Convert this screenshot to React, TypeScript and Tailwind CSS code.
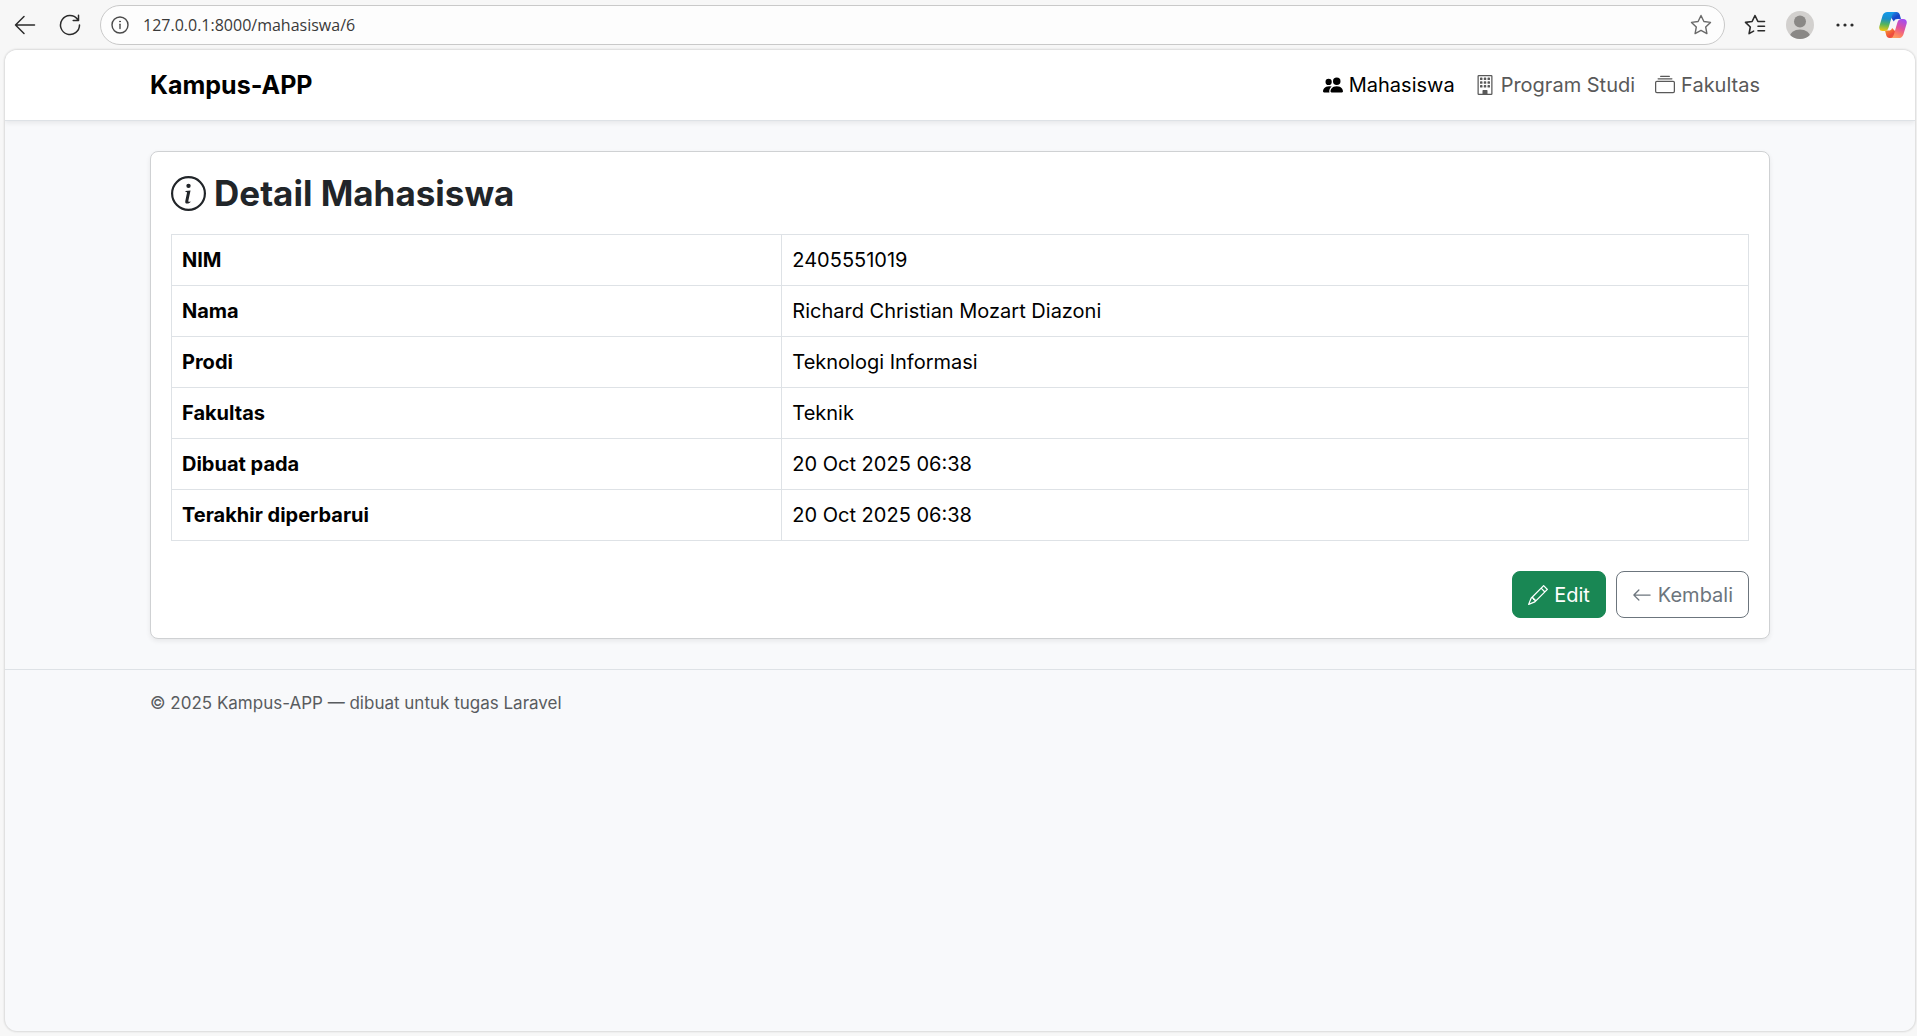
import React from "react";
import {
  BsArrowLeft,
  BsBuilding,
  BsCollection,
  BsInfoCircle,
  BsPencil,
  BsPeopleFill,
} from "react-icons/bs";

const rows = [
  ["NIM", "2405551019"],
  ["Nama", "Richard Christian Mozart Diazoni"],
  ["Prodi", "Teknologi Informasi"],
  ["Fakultas", "Teknik"],
  ["Dibuat pada", "20 Oct 2025 06:38"],
  ["Terakhir diperbarui", "20 Oct 2025 06:38"],
];

const stroke = {
  fill: "none",
  stroke: "currentColor",
  strokeLinecap: "round" as const,
  strokeLinejoin: "round" as const,
};

function CopilotLogo() {
  return (
    <svg width="28" height="28" viewBox="0 0 28 28" aria-hidden="true">
      <defs>
        <linearGradient id="cpLeft" x1="0.4" y1="0" x2="0.3" y2="1">
          <stop offset="0" stopColor="#1399ea" />
          <stop offset="0.35" stopColor="#1b8fc9" />
          <stop offset="0.65" stopColor="#55b45c" />
          <stop offset="1" stopColor="#f2c811" />
        </linearGradient>
        <linearGradient id="cpRight" x1="0.7" y1="0" x2="0.3" y2="1">
          <stop offset="0" stopColor="#a34df0" />
          <stop offset="0.45" stopColor="#e0529c" />
          <stop offset="0.75" stopColor="#fb7a68" />
          <stop offset="1" stopColor="#fda060" />
        </linearGradient>
        <linearGradient id="cpTop" x1="0" y1="0" x2="1" y2="1">
          <stop offset="0" stopColor="#22a8ee" />
          <stop offset="0.6" stopColor="#1746c8" />
          <stop offset="1" stopColor="#1f63dd" />
        </linearGradient>
        <linearGradient id="cpBottom" x1="0" y1="0" x2="1" y2="1">
          <stop offset="0" stopColor="#fba52b" />
          <stop offset="0.6" stopColor="#ee4a3c" />
          <stop offset="1" stopColor="#f4664f" />
        </linearGradient>
      </defs>
      <path d="M9 1h8.500c1.700 0 2.700.9 3.200 2.500L22 8h-3.500c-2 0-3 .8-3.600 2.600L13 8z" fill="url(#cpTop)" />
      <path d="M19 27h-8.500c-1.700 0-2.700-.9-3.200-2.500L6 19.500h3.500c2 0 3-.8 3.600-2.600L16 20z" fill="url(#cpBottom)" />
      <path d="M8.500 1h8c-2 .3-2.800 1.600-3.400 3.600l-3.500 11.800c-.7 2.300-1.800 3.600-4.100 3.600H3.800C.8 20-.3 17.800.4 15.200L3.600 4.600C4.400 2.200 6 1 8.500 1z" fill="url(#cpLeft)" />
      <path d="M19.500 27h-8c2-.3 2.800-1.600 3.400-3.600l3.500-11.800C19.100 9.300 20.200 8 22.500 8h1.700c3 0 4.100 2.200 3.400 4.800l-3.200 10.600C23.600 25.800 22 27 19.500 27z" fill="url(#cpRight)" />
    </svg>
  );
}

function BrowserBar() {
  return (
    <div className="flex h-[49px] shrink-0 items-center px-[10px] text-[#2b2b2b]">
      <button type="button" aria-label="Back" className="flex size-[30px] items-center justify-center">
        <svg width="22" height="20" viewBox="0 0 22 20" strokeWidth="1.5" {...stroke}>
          <path d="M20.500 10H1.500M10 1.500 1.500 10l8.500 8.500" />
        </svg>
      </button>
      <button type="button" aria-label="Refresh" className="ml-[15px] flex size-[30px] items-center justify-center">
        <svg width="22" height="22" viewBox="0 0 22 22" strokeWidth="1.500" {...stroke}>
          <path d="M20.500 11A9.500 9.500 0 1 1 18.500 5.200L19 6M19.500 1.200V6.500H14.200" />
        </svg>
      </button>
      <div className="ml-[15px] flex h-10 min-w-0 flex-1 items-center rounded-full border border-[#c9c9c9] bg-[#fdfdfd] pl-[10px] pr-[12px]">
        <svg width="18" height="18" viewBox="0 0 18 18" strokeWidth="1.400" {...stroke} className="shrink-0 text-[#4a4a4a]" aria-hidden="true">
          <circle cx="9" cy="9" r="8" />
          <path d="M9 8.200v4.300" />
          <circle cx="9" cy="5.500" r="0.500" fill="currentColor" strokeWidth="1" />
        </svg>
        <input
          aria-label="Address"
          defaultValue="127.0.0.1:8000/mahasiswa/6"
          className="ml-[14px] min-w-0 flex-1 bg-transparent font-['Open_Sans',sans-serif] text-base leading-6 text-[#3a3a3a] outline-none"
        />
        <button type="button" aria-label="Add to favorites" className="text-[#6a6a6a]">
          <svg width="22" height="21" viewBox="0 0 22 21" strokeWidth="1.400" {...stroke} className="block">
            <path d="m11 1.500 2.900 6 6.600.9-4.800 4.600 1.200 6.600L11 16.400l-5.900 3.200L6.300 13 1.500 8.400l6.600-.9z" />
          </svg>
        </button>
      </div>
      <button type="button" aria-label="Favorites" className="ml-[19px]">
        <svg width="22" height="21" viewBox="0 0 22 21" strokeWidth="1.600" {...stroke} className="block">
          <path d="M20.500 7.500h-6.600L11 1.500l-2.900 6-6.600.9 4.800 4.600-1.200 6.600 4.500-2.500M14 12.200h6.500M14 16.800h6.500" />
        </svg>
      </button>
      <button type="button" aria-label="Profile" className="ml-[20px]">
        <svg width="28" height="28" viewBox="0 0 28 28" className="block">
          <defs>
            <clipPath id="avatar">
              <circle cx="14" cy="14" r="14" />
            </clipPath>
          </defs>
          <g clipPath="url(#avatar)">
            <rect width="28" height="28" fill="#d2d0ce" />
            <circle cx="14" cy="10.500" r="6" fill="#8a8886" />
            <ellipse cx="14" cy="26.500" rx="10.500" ry="8" fill="#8a8886" />
          </g>
        </svg>
      </button>
      <button type="button" aria-label="Settings" className="ml-[22px]">
        <svg width="18" height="4" viewBox="0 0 18 4" fill="currentColor" className="block">
          <circle cx="2" cy="2" r="1.600" />
          <circle cx="9" cy="2" r="1.600" />
          <circle cx="16" cy="2" r="1.600" />
        </svg>
      </button>
      <button type="button" aria-label="Copilot" className="ml-[25px]">
        <CopilotLogo />
      </button>
    </div>
  );
}

export default function App() {
  return (
    <div className="flex min-h-screen flex-col bg-[#f7f7f7] pb-[5px] font-['Inter',sans-serif] text-xl leading-[30px] text-black">
      <BrowserBar />
      <div className="ml-[5px] mr-[2px] mt-px flex-1 overflow-hidden rounded-xl bg-[#f8f9fb] shadow-[0_0_2px_1px_rgba(0,0,0,0.12)]">
        <header className="relative border-b border-[#dee2e6] bg-white shadow-[0_2px_5px_rgba(0,0,0,0.075)]">
          <div className="mx-auto flex h-[70px] max-w-[1620px] items-center justify-between">
            <a href="#" className="text-[25px] font-bold">
              Kampus-APP
            </a>
            <nav className="flex gap-5 pr-[10px] text-[#595959]">
              <a href="#" className="flex items-center gap-[6px] text-black">
                <BsPeopleFill className="size-5" />
                Mahasiswa
              </a>
              <a href="#" className="flex items-center gap-[6px]">
                <BsBuilding className="size-5" />
                Program Studi
              </a>
              <a href="#" className="flex items-center gap-[6px]">
                <BsCollection className="size-5" />
                Fakultas
              </a>
            </nav>
          </div>
        </header>

        <main className="mx-auto max-w-[1620px] py-[30px]">
          <section className="rounded-lg border border-[#cfd1d3] bg-white p-5 shadow-[0_2px_5px_rgba(0,0,0,0.075)]">
            <h1 className="mb-5 flex items-center gap-2 text-[35px] font-bold leading-[42px] text-[#212529]">
              <BsInfoCircle className="size-[35px]" />
              Detail Mahasiswa
            </h1>
            <table className="w-full table-fixed border-collapse">
              <tbody>
                {rows.map(([label, value]) => (
                  <tr key={label}>
                    <th scope="row" className="w-[38.7%] border border-[#dee2e6] p-[10px] text-left font-bold">
                      {label}
                    </th>
                    <td className="border border-[#dee2e6] p-[10px]">{value}</td>
                  </tr>
                ))}
              </tbody>
            </table>
            <div className="mt-[30px] flex justify-end gap-[10px]">
              <a href="#" className="flex h-[47px] items-center gap-[6px] rounded-lg border border-[#198754] bg-[#198754] px-[15px] text-white">
                <BsPencil className="size-5" />
                Edit
              </a>
              <a href="#" className="flex h-[47px] items-center gap-[6px] rounded-lg border border-[#6c757d] px-[15px] text-[#6c757d]">
                <BsArrowLeft className="size-5" />
                Kembali
              </a>
            </div>
          </section>
        </main>

        <footer className="border-t border-[#dee2e6] py-5">
          <div className="mx-auto max-w-[1620px] text-[17px] leading-[26px] text-[#595c5f]">
            © 2025 Kampus-APP — dibuat untuk tugas Laravel
          </div>
        </footer>
      </div>
    </div>
  );
}
